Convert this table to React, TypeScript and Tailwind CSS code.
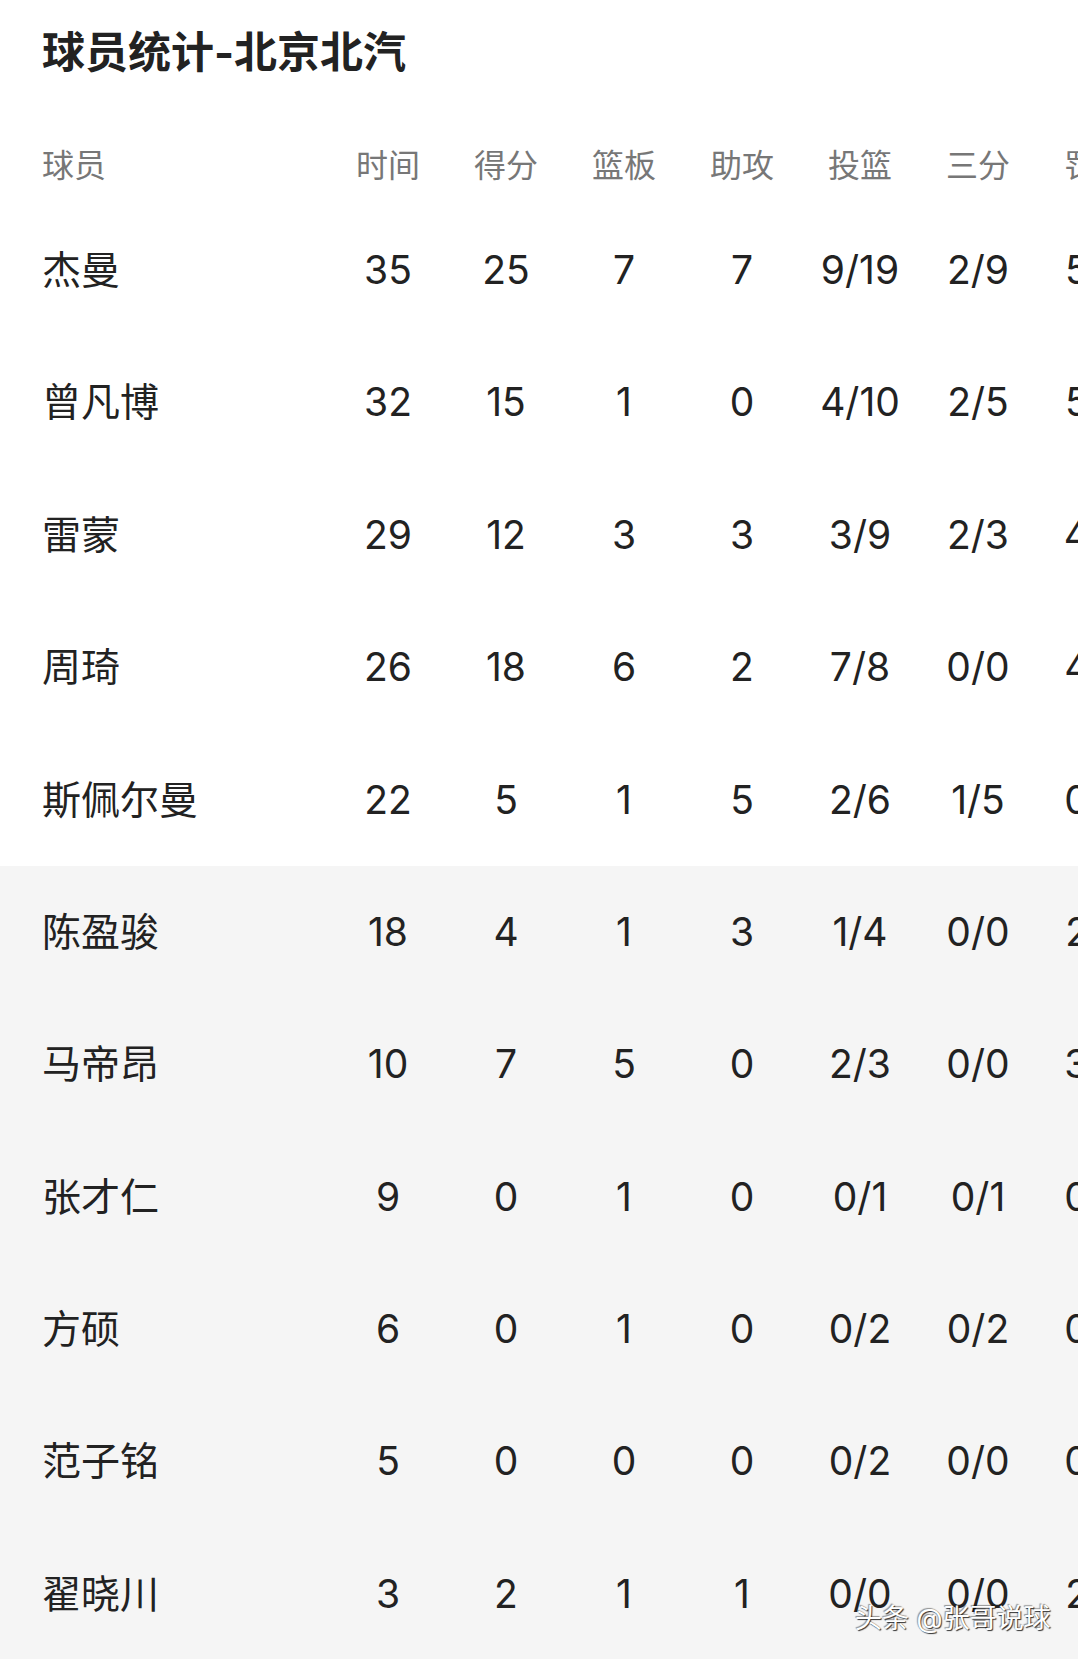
import React from "react";

const FONT = "font-['Inter','Noto_Sans_CJK_SC',sans-serif]";

const HEADERS = ["时间", "得分", "篮板", "助攻", "投篮", "三分", "罚球"];

const ROWS: { name: string; stats: string[] }[] = [
  { name: "杰曼", stats: ["35", "25", "7", "7", "9/19", "2/9", "5/6"] },
  { name: "曾凡博", stats: ["32", "15", "1", "0", "4/10", "2/5", "5/6"] },
  { name: "雷蒙", stats: ["29", "12", "3", "3", "3/9", "2/3", "4/4"] },
  { name: "周琦", stats: ["26", "18", "6", "2", "7/8", "0/0", "4/6"] },
  { name: "斯佩尔曼", stats: ["22", "5", "1", "5", "2/6", "1/5", "0/0"] },
  { name: "陈盈骏", stats: ["18", "4", "1", "3", "1/4", "0/0", "2/2"] },
  { name: "马帝昂", stats: ["10", "7", "5", "0", "2/3", "0/0", "3/4"] },
  { name: "张才仁", stats: ["9", "0", "1", "0", "0/1", "0/1", "0/0"] },
  { name: "方硕", stats: ["6", "0", "1", "0", "0/2", "0/2", "0/0"] },
  { name: "范子铭", stats: ["5", "0", "0", "0", "0/2", "0/0", "0/0"] },
  { name: "翟晓川", stats: ["3", "2", "1", "1", "0/0", "0/0", "2/2"] },
];

const App = () => {
  return (
    <div className={`relative w-[1078px] h-[1659px] overflow-hidden bg-white ${FONT}`}>
      {/* Title */}
      <div className="h-[128px] pl-[42px] pt-[28px]">
        <h1 className="text-[43px] leading-[48px] font-bold text-[#222]">
          球员统计-北京北汽
        </h1>
      </div>

      {/* Header */}
      <div className="flex h-[76px] items-center text-[32px] text-[#777]">
        <div className="w-[329px] shrink-0 pl-[42px]">球员</div>
        {HEADERS.map((h) => (
          <div key={h} className="w-[118px] shrink-0 text-center whitespace-nowrap">
            {h}
          </div>
        ))}
      </div>

      {/* Rows */}
      {ROWS.map((row, index) => (
        <div
          key={row.name}
          className={`flex h-[132.4px] items-center text-[39px] text-[#222] ${
            index >= 5 ? "bg-[#f5f5f5]" : "bg-white"
          }`}
        >
          <div className="w-[329px] shrink-0 pl-[42px] whitespace-nowrap">
            {row.name}
          </div>
          {row.stats.map((s, i) => (
            <div key={i} className="w-[118px] shrink-0 text-center whitespace-nowrap">
              {s}
            </div>
          ))}
        </div>
      ))}

      {/* Watermark */}
      <div className="absolute left-[855px] top-[1602px] text-[27px] leading-[34px] text-white whitespace-nowrap [text-shadow:1px_1px_1px_rgba(0,0,0,0.8),-1px_-1px_1px_rgba(0,0,0,0.4)]">
        头条 @张哥说球
      </div>
    </div>
  );
};

export default App;
